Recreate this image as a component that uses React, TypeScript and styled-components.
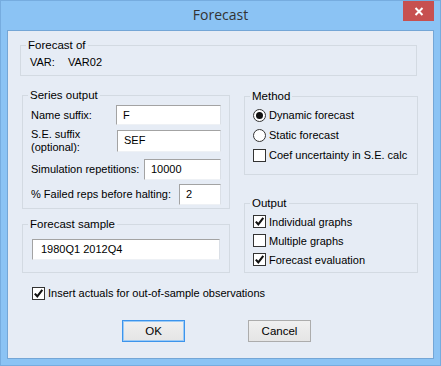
import React from "react";
import styled, { createGlobalStyle } from "styled-components";

const Global = createGlobalStyle`
  html, body { margin: 0; padding: 0; background: #8bc3f4; }
  body { font-family: "Liberation Sans", Arial, sans-serif; font-size: 11px; color: #000; }
  * { box-sizing: border-box; }
`;

const Window = styled.div`
  width: 441px;
  height: 366px;
  background: #8bc3f4;
  border: 1px solid #76acdf;
  display: flex;
  flex-direction: column;
`;

const TitleBar = styled.div`
  height: 29px;
  display: grid;
  grid-template-columns: 1fr auto 1fr;
  align-items: start;
`;

const Title = styled.div`
  grid-column: 2;
  font-family: "Open Sans", "Noto Sans", sans-serif;
  font-size: 14px;
  line-height: 28px;
  color: #333;
`;

const CloseButton = styled.div`
  grid-column: 3;
  justify-self: end;
  margin-right: 6px;
  width: 31px;
  height: 20px;
  background: #c75050;
  display: flex;
  align-items: center;
  justify-content: center;
`;

const Client = styled.div`
  margin: 0 6px 6px 6px;
  height: 329px;
  background: #e6ecf5;
  border: 1px solid #74a6d6;
  padding: 7px 16px 0 12px;
`;

const Group = styled.fieldset<{ $w?: number }>`
  margin: 0;
  padding: 0;
  border: 1px solid #d3dae2;
  min-inline-size: 0;
  width: ${(p) => (p.$w ? `${p.$w}px` : "auto")};
`;

const Legend = styled.legend`
  margin-left: 5px;
  padding: 0 2px;
  line-height: 14px;
  font-size: 11.5px;
`;

const ForecastBody = styled.div`
  display: flex;
  padding: 4px 0 6px 9px;
  line-height: 13px;
`;

const VarLabel = styled.span`
  width: 38px;
`;

const Columns = styled.div`
  display: flex;
  gap: 14px;
  margin-top: 12px;
  padding-left: 2px;
`;

const Column = styled.div<{ $top?: number }>`
  display: flex;
  flex-direction: column;
  margin-top: ${(p) => p.$top ?? 0}px;
`;

const SeriesBody = styled.div`
  display: flex;
  flex-direction: column;
  padding: 3px 8px 3px 8px;
`;

const FieldRow = styled.div<{ $h: number; $gap?: number }>`
  display: flex;
  align-items: center;
  height: ${(p) => p.$h}px;
  margin-top: ${(p) => p.$gap ?? 0}px;
`;

const FieldLabel = styled.span`
  flex: 1;
  line-height: 13px;
`;

const Input = styled.div<{ $w: number; $h?: number }>`
  width: ${(p) => p.$w}px;
  height: ${(p) => p.$h ?? 20}px;
  background: #fff;
  border-top: 1px solid #a3a3a3;
  border-left: 1px solid #a3a3a3;
  border-right: 1px solid #dadfe6;
  border-bottom: 1px solid #eef1f5;
  display: flex;
  align-items: center;
  padding-left: 6px;
  line-height: 13px;
`;

const Spacer = styled.div<{ $h: number }>`
  height: ${(p) => p.$h}px;
`;

const SampleBody = styled.div`
  padding: 8px 0 12px 9px;
`;

const OptionBody = styled.div<{ $top: number; $bottom: number }>`
  display: flex;
  flex-direction: column;
  padding: ${(p) => p.$top}px 0 ${(p) => p.$bottom}px 8px;
`;

const Option = styled.div<{ $h: number }>`
  display: flex;
  align-items: center;
  gap: 3px;
  height: ${(p) => p.$h}px;
`;

const Box = styled.span`
  width: 13px;
  height: 13px;
  border: 1px solid #333;
  background: #fff;
  display: flex;
  align-items: center;
  justify-content: center;
`;

const Radio = styled.span`
  width: 13px;
  height: 13px;
  border: 1px solid #333;
  border-radius: 50%;
  background: #fff;
  display: flex;
  align-items: center;
  justify-content: center;
`;

const Dot = styled.span`
  width: 7px;
  height: 7px;
  border-radius: 50%;
  background: #111;
`;

const InsertRow = styled.div`
  display: flex;
  align-items: center;
  gap: 3px;
  height: 20px;
  margin-top: 10px;
  padding-left: 12px;
`;

const Buttons = styled.div`
  display: flex;
  gap: 63px;
  margin-top: 17px;
  padding-left: 102px;
`;

const Button = styled.div<{ $default?: boolean }>`
  width: 63px;
  height: 22px;
  display: flex;
  align-items: center;
  justify-content: center;
  background: linear-gradient(#f0f0f0, #e5e5e5);
  border: 1px solid ${(p) => (p.$default ? "#3c94ec" : "#acacac")};
  box-shadow: ${(p) => (p.$default ? "inset 0 0 0 1px #9ccaf5" : "none")};
  font-size: 11.5px;
`;

function Check({ on }: { on?: boolean }) {
  return (
    <Box>
      {on && (
        <svg width="11" height="11" viewBox="0 0 11 11">
          <path d="M1.8 5.6 L4.3 8.3 L9.3 1.8" fill="none" stroke="#111" strokeWidth="2.1" />
        </svg>
      )}
    </Box>
  );
}

function RadioBtn({ on }: { on?: boolean }) {
  return <Radio>{on && <Dot />}</Radio>;
}

export default function App() {
  return (
    <>
      <Global />
      <Window>
        <TitleBar>
          <Title>Forecast</Title>
          <CloseButton>
            <svg width="10" height="9" viewBox="0 0 10 9">
              <path d="M1.5 1 L8.5 8 M8.5 1 L1.5 8" stroke="#fff" strokeWidth="2" />
            </svg>
          </CloseButton>
        </TitleBar>
        <Client>
          <Group>
            <Legend>Forecast of</Legend>
            <ForecastBody>
              <VarLabel>VAR:</VarLabel>
              <span>VAR02</span>
            </ForecastBody>
          </Group>

          <Columns>
            <Column>
              <Group $w={208}>
                <Legend>Series output</Legend>
                <SeriesBody>
                  <FieldRow $h={20}>
                    <FieldLabel>Name suffix:</FieldLabel>
                    <Input $w={105}>F</Input>
                  </FieldRow>
                  <FieldRow $h={27} $gap={2}>
                    <FieldLabel>
                      S.E. suffix
                      <br />
                      (optional):
                    </FieldLabel>
                    <Input $w={104} $h={22}>SEF</Input>
                  </FieldRow>
                  <FieldRow $h={21} $gap={5}>
                    <FieldLabel>Simulation repetitions:</FieldLabel>
                    <Input $w={77} $h={21}>10000</Input>
                  </FieldRow>
                  <FieldRow $h={21} $gap={4}>
                    <FieldLabel>% Failed reps before halting:</FieldLabel>
                    <Input $w={42} $h={21}>2</Input>
                  </FieldRow>
                </SeriesBody>
              </Group>
              <Spacer $h={8} />
              <Group $w={208}>
                <Legend>Forecast sample</Legend>
                <SampleBody>
                  <Input $w={188} $h={21} style={{ paddingLeft: 8 }}>
                    1980Q1 2012Q4
                  </Input>
                </SampleBody>
              </Group>
            </Column>

            <Column $top={1}>
              <Group $w={174}>
                <Legend>Method</Legend>
                <OptionBody $top={2} $bottom={9}>
                  <Option $h={20}>
                    <RadioBtn on />
                    Dynamic forecast
                  </Option>
                  <Option $h={20}>
                    <RadioBtn />
                    Static forecast
                  </Option>
                  <Option $h={20}>
                    <Check />
                    Coef uncertainty in S.E. calc
                  </Option>
                </OptionBody>
              </Group>
              <Spacer $h={21} />
              <Group $w={174}>
                <Legend>Output</Legend>
                <OptionBody $top={2} $bottom={3}>
                  <Option $h={19}>
                    <Check on />
                    Individual graphs
                  </Option>
                  <Option $h={19}>
                    <Check />
                    Multiple graphs
                  </Option>
                  <Option $h={19}>
                    <Check on />
                    Forecast evaluation
                  </Option>
                </OptionBody>
              </Group>
            </Column>
          </Columns>

          <InsertRow>
            <Check on />
            Insert actuals for out-of-sample observations
          </InsertRow>

          <Buttons>
            <Button $default>OK</Button>
            <Button>Cancel</Button>
          </Buttons>
        </Client>
      </Window>
    </>
  );
}
